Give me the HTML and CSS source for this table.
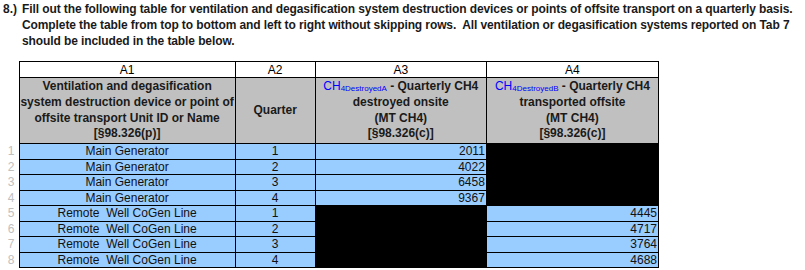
FILE: index.html
```html
<!DOCTYPE html>
<html>
<head>
<meta charset="utf-8">
<link rel="stylesheet" href="styles.css">
</head>
<body>
<div class="intro">
  <span class="intro-num">8.)</span>
  <p class="intro-text">Fill out the following table for ventilation and degasification system destruction devices or points of offsite transport on a quarterly basis.<br>Complete the table from top to bottom and left to right without skipping rows.&nbsp; All ventilation or degasification systems reported on Tab 7<br>should be included in the table below.</p>
</div>
<table class="grid">
  <colgroup>
    <col class="c-num"><col class="c-a1"><col class="c-a2"><col class="c-a3"><col class="c-a4">
  </colgroup>
  <tr class="codes">
    <td class="rownum"></td><td>A1</td><td>A2</td><td>A3</td><td>A4</td>
  </tr>
  <tr class="heads">
    <td class="rownum"></td>
    <td>Ventilation and degasification<br>system destruction device or point of<br>offsite transport Unit ID or Name<br>[§98.326(p)]</td>
    <td>Quarter</td>
    <td><span class="var">CH<sub>4DestroyedA</sub></span> - Quarterly CH4<br>destroyed onsite<br>(MT CH4)<br>[§98.326(c)]</td>
    <td><span class="var">CH<sub>4DestroyedB</sub></span> - Quarterly CH4<br>transported offsite<br>(MT CH4)<br>[§98.326(c)]</td>
  </tr>
  <tr class="row"><td class="rownum">1</td><td class="ctr">Main Generator</td><td class="ctr">1</td><td class="num">2011</td><td class="off"></td></tr>
  <tr class="row"><td class="rownum">2</td><td class="ctr">Main Generator</td><td class="ctr">2</td><td class="num">4022</td><td class="off"></td></tr>
  <tr class="row"><td class="rownum">3</td><td class="ctr">Main Generator</td><td class="ctr">3</td><td class="num">6458</td><td class="off"></td></tr>
  <tr class="row"><td class="rownum">4</td><td class="ctr">Main Generator</td><td class="ctr">4</td><td class="num">9367</td><td class="off"></td></tr>
  <tr class="row"><td class="rownum">5</td><td class="ctr">Remote&nbsp; Well CoGen Line</td><td class="ctr">1</td><td class="off"></td><td class="num">4445</td></tr>
  <tr class="row"><td class="rownum">6</td><td class="ctr">Remote&nbsp; Well CoGen Line</td><td class="ctr">2</td><td class="off"></td><td class="num">4717</td></tr>
  <tr class="row"><td class="rownum">7</td><td class="ctr">Remote&nbsp; Well CoGen Line</td><td class="ctr">3</td><td class="off"></td><td class="num">3764</td></tr>
  <tr class="row"><td class="rownum">8</td><td class="ctr">Remote&nbsp; Well CoGen Line</td><td class="ctr">4</td><td class="off"></td><td class="num">4688</td></tr>
</table>
</body>
</html>
```
FILE: styles.css
```css
html, body {
  margin: 0;
  padding: 0;
  background: #ffffff;
  font-family: "Liberation Sans", Arial, sans-serif;
  color: #000000;
}

.intro {
  display: flex;
  padding: 1px 0 0 3px;
  height: 61px;
  box-sizing: border-box;
  font-size: 12px;
  font-weight: bold;
  line-height: 16px;
  color: #1a1a1a;
}

.intro-num {
  width: 19px;
  flex: none;
}

.intro-text {
  margin: 0;
  white-space: nowrap;
  letter-spacing: -0.1px;
}

.grid {
  border-collapse: collapse;
  table-layout: fixed;
  width: 659px;
  font-size: 12px;
}

.c-num { width: 19px; }
.c-a1 { width: 216px; }
.c-a2 { width: 80px; }
.c-a3 { width: 171px; }
.c-a4 { width: 172px; }

.grid td {
  border: 1px solid #000000;
  padding: 0;
  text-align: center;
  vertical-align: middle;
  white-space: nowrap;
  overflow: hidden;
}

.grid td.rownum {
  border: none;
  border-right: 1px solid #000000;
  color: #c0c0c0;
  text-align: right;
  padding-right: 4px;
}

.codes td {
  height: 15px;
  line-height: 14px;
  background: #ffffff;
}

.heads td {
  height: 65px;
  background: #c0c0c0;
  font-weight: bold;
  line-height: 15.7px;
  color: #1a1a1a;
}

.heads td.rownum {
  background: #ffffff;
}

.var {
  color: #0000ff;
  font-weight: normal;
}

.var sub {
  font-size: 8px;
  vertical-align: -1px;
  line-height: 8px;
}

.row td {
  height: 14.5px;
  line-height: 14px;
  background: #99ccff;
  color: #111111;
}

.row td.rownum {
  background: #ffffff;
  color: #c0c0c0;
}

.row td.num {
  text-align: right;
  padding-right: 1px;
}

.row td.off {
  background: #000000;
}
```
